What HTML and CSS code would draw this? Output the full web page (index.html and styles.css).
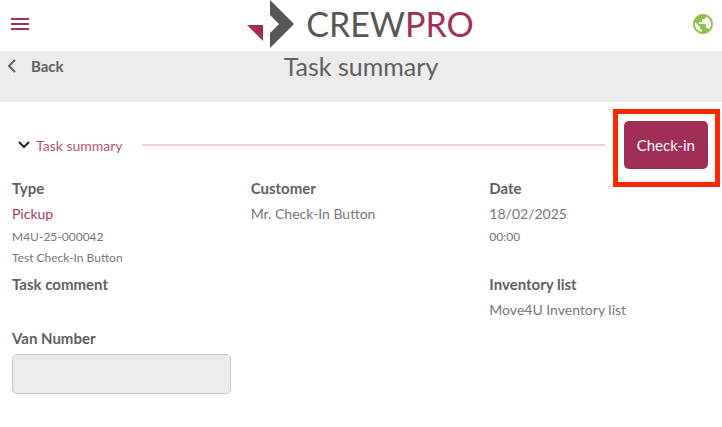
FILE: index.html
```html
<!DOCTYPE html>
<html lang="en">
<head>
  <meta charset="UTF-8" />
  <meta name="viewport" content="width=device-width, initial-scale=1.0"/>
  <title>CrewPro - Task summary</title>
  <link rel="stylesheet" href="styles.css">
</head>
<body>

<!-- Top bar -->
<header class="topbar">
  <button class="icon-button" type="button" aria-label="Menu">
    <svg width="18" height="14" viewBox="0 0 18 14" fill="#a12d59">
      <path d="M0 1h18v2H0zM0 6h18v2H0zM0 11h18v2H0z"/>
    </svg>
  </button>
  <a class="logo" href="#">
    <svg width="48" height="48" viewBox="0 0 48 48">
      <path d="M1 25h16v16z" fill="#a12d59"/>
      <path d="M24 0l24 24-24 24V33l9-9-9-9z" fill="#575756"/>
    </svg>
    <span class="logo-text">CREW<span class="logo-pro">PRO</span></span>
  </a>
  <button class="icon-button" type="button" aria-label="Language">
    <svg width="24" height="24" viewBox="0 0 24 24" fill="#8bc34a">
      <path d="M12 2C6.480 2 2 6.480 2 12s4.480 10 10 10 10-4.480 10-10S17.520 2 12 2zm-1 17.930c-3.950-.490-7-3.850-7-7.930 0-.620.080-1.210.210-1.790L9 15v1c0 1.100.900 2 2 2v1.930zm6.900-2.540c-.260-.810-1-1.390-1.900-1.390h-1v-3c0-.550-.450-1-1-1H8v-2h2c.550 0 1-.450 1-1V7h2c1.100 0 2-.900 2-2v-.410c2.930 1.190 5 4.060 5 7.410 0 2.080-.800 3.970-2.100 5.390z"/>
    </svg>
  </button>
</header>

<!-- Page title -->
<div class="titlebar">
  <a class="back" href="#">
    <svg width="9" height="14" viewBox="0 0 9 14" fill="none" stroke="#606060" stroke-width="2">
      <path d="M7 1L1 7l6 6"/>
    </svg>
    Back
  </a>
  <h1>Task summary</h1>
</div>

<main>
  <div class="section-header">
    <button class="section-toggle" type="button" aria-expanded="true">
      <svg width="12" height="8" viewBox="0 0 12 8" fill="none" stroke="#212529" stroke-width="2">
        <path d="M1 1l5 5 5-5"/>
      </svg>
      Task summary
    </button>
    <div class="line"></div>
    <div class="highlight">
      <button class="checkin" type="button">Check-in</button>
    </div>
  </div>

  <div class="details">
    <div>
      <h2>Type</h2>
      <p class="pickup">Pickup</p>
      <p class="small">M4U-25-000042</p>
      <p class="small">Test Check-In Button</p>
    </div>
    <div>
      <h2>Customer</h2>
      <p>Mr. Check-In Button</p>
    </div>
    <div>
      <h2>Date</h2>
      <p>18/02/2025</p>
      <p class="small">00:00</p>
    </div>

    <div class="comment">
      <h2>Task comment</h2>
    </div>
    <div>
      <h2>Inventory list</h2>
      <p>Move4U Inventory list</p>
    </div>

    <div class="field">
      <label for="van-number">Van Number</label>
      <input type="text" id="van-number" disabled>
    </div>
  </div>
</main>

</body>
</html>
```

FILE: styles.css
```css
/* Global Styling */
* {
  box-sizing: border-box;
}

body {
  font-family: Lato, sans-serif;
  font-size: 14px;
  line-height: 25px;
  margin: 0;
  background: #fff;
  color: #606060;
}

h1, h2, p {
  margin: 0;
}

button {
  font: inherit;
  border: none;
  padding: 0;
  background: none;
  cursor: pointer;
}

svg {
  display: block;
}

a {
  color: inherit;
  text-decoration: none;
}

/* Top bar */
.topbar {
  display: flex;
  align-items: center;
  justify-content: space-between;
  height: 51px;
  padding: 0 7px 3px 11px;
}

.logo {
  display: flex;
  align-items: center;
  gap: 12px;
}

.logo-text {
  font-size: 34px;
  line-height: 48px;
  color: #575756;
}

.logo-pro {
  color: #a12d59;
}

/* Title bar */
.titlebar {
  display: grid;
  grid-template-columns: 1fr auto 1fr;
  align-items: start;
  height: 51px;
  padding: 0 8px;
  background: #ececec;
}

.back {
  display: flex;
  align-items: center;
  gap: 14px;
  font-size: 15px;
  line-height: 30px;
  font-weight: bold;
}

h1 {
  font-size: 25px;
  line-height: 30px;
  font-weight: normal;
}

/* Section header */
.section-header {
  display: flex;
  align-items: center;
  padding: 19px 14px 7px 18px;
}

.section-toggle {
  display: flex;
  align-items: center;
  gap: 6px;
  color: #b8507a;
}

.line {
  flex: 1;
  height: 2px;
  margin: 0 19px;
  background: #f8cddb;
}

.highlight {
  position: relative;
}

/* Red frame drawn around the button */
.highlight::after {
  content: "";
  position: absolute;
  inset: -12px -12px -18px -11px;
  border: 5px solid #ff2600;
  pointer-events: none;
}

.checkin {
  display: block;
  height: 48px;
  padding: 0 13px;
  border-radius: 5px;
  background: #a12d59;
  color: #fff;
  font-size: 15px;
}

/* Details */
.details {
  display: grid;
  grid-template-columns: repeat(3, 1fr);
  gap: 4px 20px;
  padding: 0 14px 32px 12px;
}

h2, label {
  font-size: 15px;
  line-height: 25px;
  font-weight: bold;
}

.details p {
  color: #777;
}

.details .pickup {
  color: #b03868;
}

.details .small {
  font-size: 12px;
  line-height: 21px;
}

.comment {
  grid-column: span 2;
}

.field label {
  display: block;
}

.field input {
  display: block;
  width: 100%;
  height: 40px;
  margin-top: 3px;
  padding: 0 12px;
  border: 1px solid #c8c8c8;
  border-radius: 5px;
  background: #ebebeb;
  font: inherit;
}

@media (max-width: 480px) {
  .details {
    grid-template-columns: 1fr;
  }

  .comment {
    grid-column: auto;
  }
}
```
